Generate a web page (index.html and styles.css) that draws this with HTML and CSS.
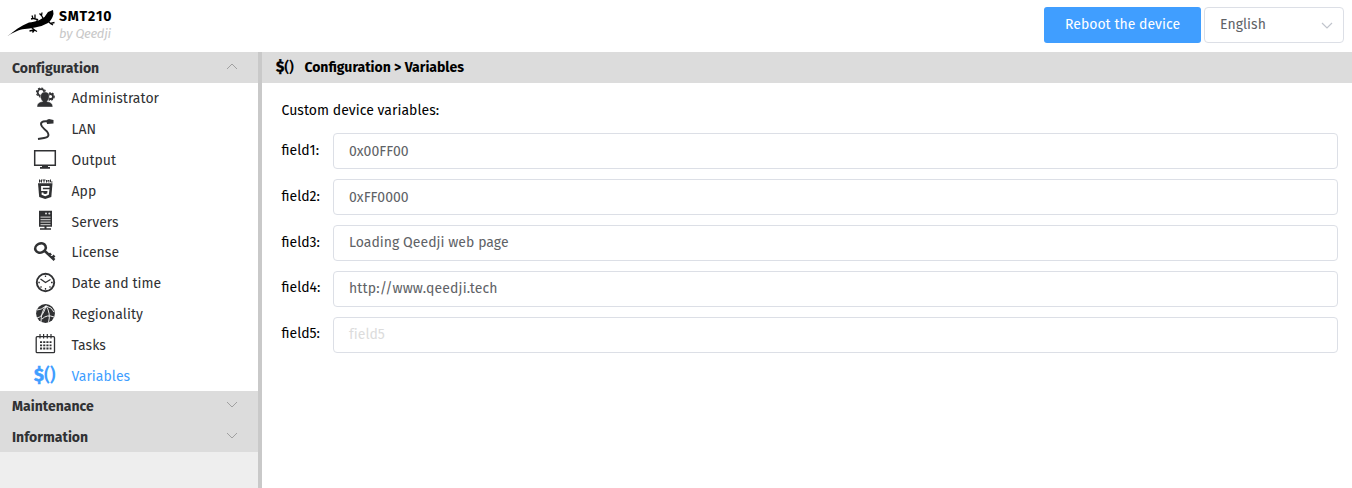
FILE: index.html
```html
<!DOCTYPE html>
<html lang="en"><head><meta charset="utf-8"><title>SMT210</title><link rel="stylesheet" href="styles.css"></head>
<body>
<header class="topbar">
  <svg class="logo" viewBox="0 0 50 32" width="50" height="32"><path d="M0 26.500C7 21 14 15.500 22 12.500C29 12 33 10 37.500 7L41 2L46 0L46.500 4Q45 10 41 13Q35 16.500 28 17.500C20 19.500 15 18 9 21.500Q4 23.500 0 26.500Z"/><path d="M29 13L30.500 9.500L26 8.500L25 5.500M28 9L28 4.500M26 8.500L24 9M41 11L43.500 13.500L47.500 12.500M43.500 13.500L46 15M24 17L27.500 20L25.500 22.500M27.500 20L30 21.500M27 20L22.500 21M37 10L34.500 5.500L35 2.500M34.500 5.500L32.500 3.500" fill="none" stroke="#000" stroke-width="1.300"/></svg>
  <div class="brand"><strong>SMT210</strong><em>by Qeedji</em></div>
  <button class="reboot">Reboot the device</button>
  <div class="select"><span>English</span><svg class="chev" viewBox="0 0 12 7"><path d="M1 1L6 6L11 1"/></svg></div>
</header>
<div class="body">
  <nav class="side">
    <div class="group"><span>Configuration</span><svg class="arrow" viewBox="0 0 12 7"><path d="M1 6L6 1L11 6"/></svg></div>
    <ul class="items">
      <li><svg viewBox="0 0 24 22"><g fill="none" stroke="#303133"><circle cx="8" cy="5.500" r="3.300" stroke-width="1.700"/><circle cx="8" cy="5.500" r="4.500" stroke-width="1.200" stroke-dasharray="2 1.500"/><circle cx="17.500" cy="9.500" r="2.500" stroke-width="1.800"/><circle cx="17.500" cy="9.500" r="3.700" stroke-width="1.200" stroke-dasharray="1.800 1.300"/></g><path d="M12 5c3.500 0 4.800 2.500 4 6q-.6 2.500-2 3.500c3.500.5 5.800 2 5.800 5.500H4c0-3.500 2-5 5.700-5.500q-1.700-1.500-2.200-4Q7.200 5 12 5Z" stroke="#fff" stroke-width=".4"/></svg><span>Administrator</span></li>
      <li><svg viewBox="0 0 24 22"><path d="M15 3.500C9 2.500 6.500 5 9 8.500Q11 11 14 13.500Q18 19 11 20L5 21" fill="none" stroke="#303133" stroke-width="1.900"/><path d="M13.500 2L16 1L20.500 2V5.500L14 6Z"/></svg><span>LAN</span></li>
      <li><svg viewBox="0 0 24 22"><path d="M1.700 1.700H22.300V16.300H1.700Z" fill="none" stroke="#303133" stroke-width="1.500"/><path d="M9 16H15V18H17V19.800H7V18H9Z"/></svg><span>Output</span></li>
      <li><svg viewBox="0 0 24 22"><path d="M6.500 .5v3M8.500 .5v3M6.500 2h2M9.500 1h3M11 1v2.500M13.500 3.500V1l1.200 1.300L15.900 1v2.500M17.500 .5v2.500h2" fill="none" stroke="#303133"/><path d="M5 4.300H19.500L18.300 18L12.200 20L6.200 18Z"/><path d="M16.500 7.800H9V11.200H15.500L15 15.200L12.200 16.200L9.500 15.200V13.500" fill="none" stroke="#fff" stroke-width="1.800"/></svg><span>App</span></li>
      <li><svg viewBox="0 0 24 22"><path d="M6 .7H19V16.700H6ZM11.500 16.700H13.500V18.200H18V19.700H7V18.200H11.500Z"/><path d="M7.500 7.200H17.500M7.500 9.700H17.500M7.500 12.200H17.500M7.500 14.700H17.500" stroke="#bbb" stroke-width="1.300"/><circle cx="13" cy="3.400" r="1" fill="#ddd"/><circle cx="16.300" cy="3.400" r="1" fill="#ddd"/></svg><span>Servers</span></li>
      <li><svg viewBox="0 0 24 22"><ellipse cx="7.500" cy="7" rx="5.400" ry="4.500" transform="rotate(-25 7.500 7)" fill="none" stroke="#303133" stroke-width="2.600"/><path d="M11 9.300L21.500 19M15.500 15L18 12.500M18.500 17.500L21.500 14.500" fill="none" stroke="#303133" stroke-width="2.600"/></svg><span>License</span></li>
      <li><svg viewBox="0 0 24 22"><circle cx="12.500" cy="10.500" r="8.700" fill="none" stroke="#303133" stroke-width="1.900"/><path d="M7.500 7L12.500 10.500L17.500 7.500M12.500 3.500v1.500M12.500 16v1.800M5.300 10.500h1.500M18 10.500h1.700M7.500 15.500l1-1M17.500 15.500l-1-1" fill="none" stroke="#303133" stroke-width="1.300"/></svg><span>Date and time</span></li>
      <li><svg viewBox="0 0 24 22"><circle cx="12.500" cy="10.500" r="9.400"/><path d="M4 7Q8 7 13 3Q19 4 21 9M13 2.500Q8 9 8 19M13 3Q18 10 15.500 19.500M4 15Q10 14 13 3M9 16Q14 11 21 14" fill="none" stroke="#fff" stroke-width=".9"/></svg><span>Regionality</span></li>
      <li><svg viewBox="0 0 24 22"><rect x="3.200" y="3.700" width="18.300" height="16" rx="1" fill="none" stroke="#303133" stroke-width="1.300"/><path d="M7 1V5.500M10.600 1V5.500M14.300 1V5.500M18 1V5.500" stroke="#303133" stroke-width="1.200"/><path d="M7 9.200H18.500M7 12.300H18.500M7 15.500H18.500" stroke="#303133" stroke-width="1.800" stroke-dasharray="2.100 1.100"/></svg><span>Tasks</span></li>
      <li class="on"><span class="dollar"><b>$</b>()</span><span>Variables</span></li>
    </ul>
    <div class="group"><span>Maintenance</span><svg class="arrow" viewBox="0 0 12 7"><path d="M1 1L6 6L11 1"/></svg></div>
    <div class="group"><span>Information</span><svg class="arrow" viewBox="0 0 12 7"><path d="M1 1L6 6L11 1"/></svg></div>
  </nav>
  <main>
    <h1><span class="dollar small"><b>$</b>()</span><span>Configuration &gt; Variables</span></h1>
    <section class="form">
      <p>Custom device variables:</p>
      <div class="row"><label>field1:</label><div class="input">0x00FF00</div></div>
      <div class="row"><label>field2:</label><div class="input">0xFF0000</div></div>
      <div class="row up"><label class="low">field3:</label><div class="input">Loading Qeedji web page</div></div>
      <div class="row up"><label>field4:</label><div class="input url">http://www.qeedji.tech</div></div>
      <div class="row up"><label>field5:</label><div class="input empty">field5</div></div>
    </section>
  </main>
</div>
</body></html>
```
FILE: styles.css
```css
* { box-sizing: border-box; }
body { margin: 0; height: 488px; overflow: hidden; display: flex; flex-direction: column; background: #fff; color: #000; font: 14px/20px "Fira Sans", "Noto Sans", sans-serif; letter-spacing: .04px; }
.topbar { height: 52px; flex: none; display: flex; align-items: flex-start; padding: 7px 8px 0 7px; }
.logo { margin-top: 3px; overflow: visible; }
.brand { display: flex; flex-direction: column; margin-left: 2px; flex: 1; line-height: 17px; }
.brand strong { padding-top: 1px; letter-spacing: .95px; }
.brand em { color: #c8c8c8; font-size: 13px; letter-spacing: -.25px; }
.reboot { width: 157px; height: 36px; border: 0; border-radius: 3px; background: #409eff; color: #fff; font: inherit; letter-spacing: .02px; padding: 0; }
.select { width: 140px; height: 36px; margin-left: 3px; border: 1px solid #dcdfe6; border-radius: 4px; display: flex; align-items: center; justify-content: space-between; padding: 0 10.500px 0 15px; color: #606266; }
.chev { width: 12px; height: 7px; fill: none; stroke: #c0c4cc; stroke-width: 1.200; }
.body { display: flex; flex: 1; }
.side { width: 262px; border-right: 4px solid #c9c9c9; background: #eee; color: #303133; }
.group { height: 30.600px; display: flex; align-items: center; justify-content: space-between; padding: 0 20px 0 12px; background: #dcdcdc; font-weight: bold; letter-spacing: .02px; }
.group span { padding-top: 2.600px; }
.arrow { width: 12px; height: 7px; fill: none; stroke: #a0a0a0; margin-bottom: 2px; }
.items { list-style: none; margin: 0; padding: 0; background: #fff; }
.items li { height: 30.800px; display: flex; align-items: center; padding-left: 33px; gap: 14.500px; }
.items span { padding-top: 2.900px; }
.items svg { width: 24px; height: 22px; fill: #303133; }
.items .on { color: #409eff; }
.dollar { width: 24px; font-size: 18px; line-height: 22px; white-space: nowrap; }
.dollar b { -webkit-text-stroke: .5px currentColor; }
.items .dollar { padding: 0 0 0 1px; font-weight: 500; }
.dollar.small { width: 20px; font-size: 15px; font-weight: 500; padding-bottom: 1px; }
main { flex: 1; }
h1 { margin: 0; height: 31px; background: #dcdcdc; display: flex; align-items: center; font-size: 14px; padding-left: 14px; gap: 8.400px; letter-spacing: 0; }
.form { padding: 18px 14px 0 19.500px; }
p { margin: 0 0 12px; }
.row { display: flex; align-items: center; margin-bottom: 10px; }
label { width: 51.500px; padding-bottom: 1px; letter-spacing: 0; }
.up label { padding-bottom: 2px; }
.up .low { padding-bottom: 0; }
.input { flex: 1; height: 36px; border: 1px solid #dcdfe6; border-radius: 4px; display: flex; align-items: center; padding: 2px 0 0 15px; color: #606266; }
.up .input { padding-top: 0; }
.up .url { letter-spacing: .13px; }
.empty { color: #dcdcdc; }
```
